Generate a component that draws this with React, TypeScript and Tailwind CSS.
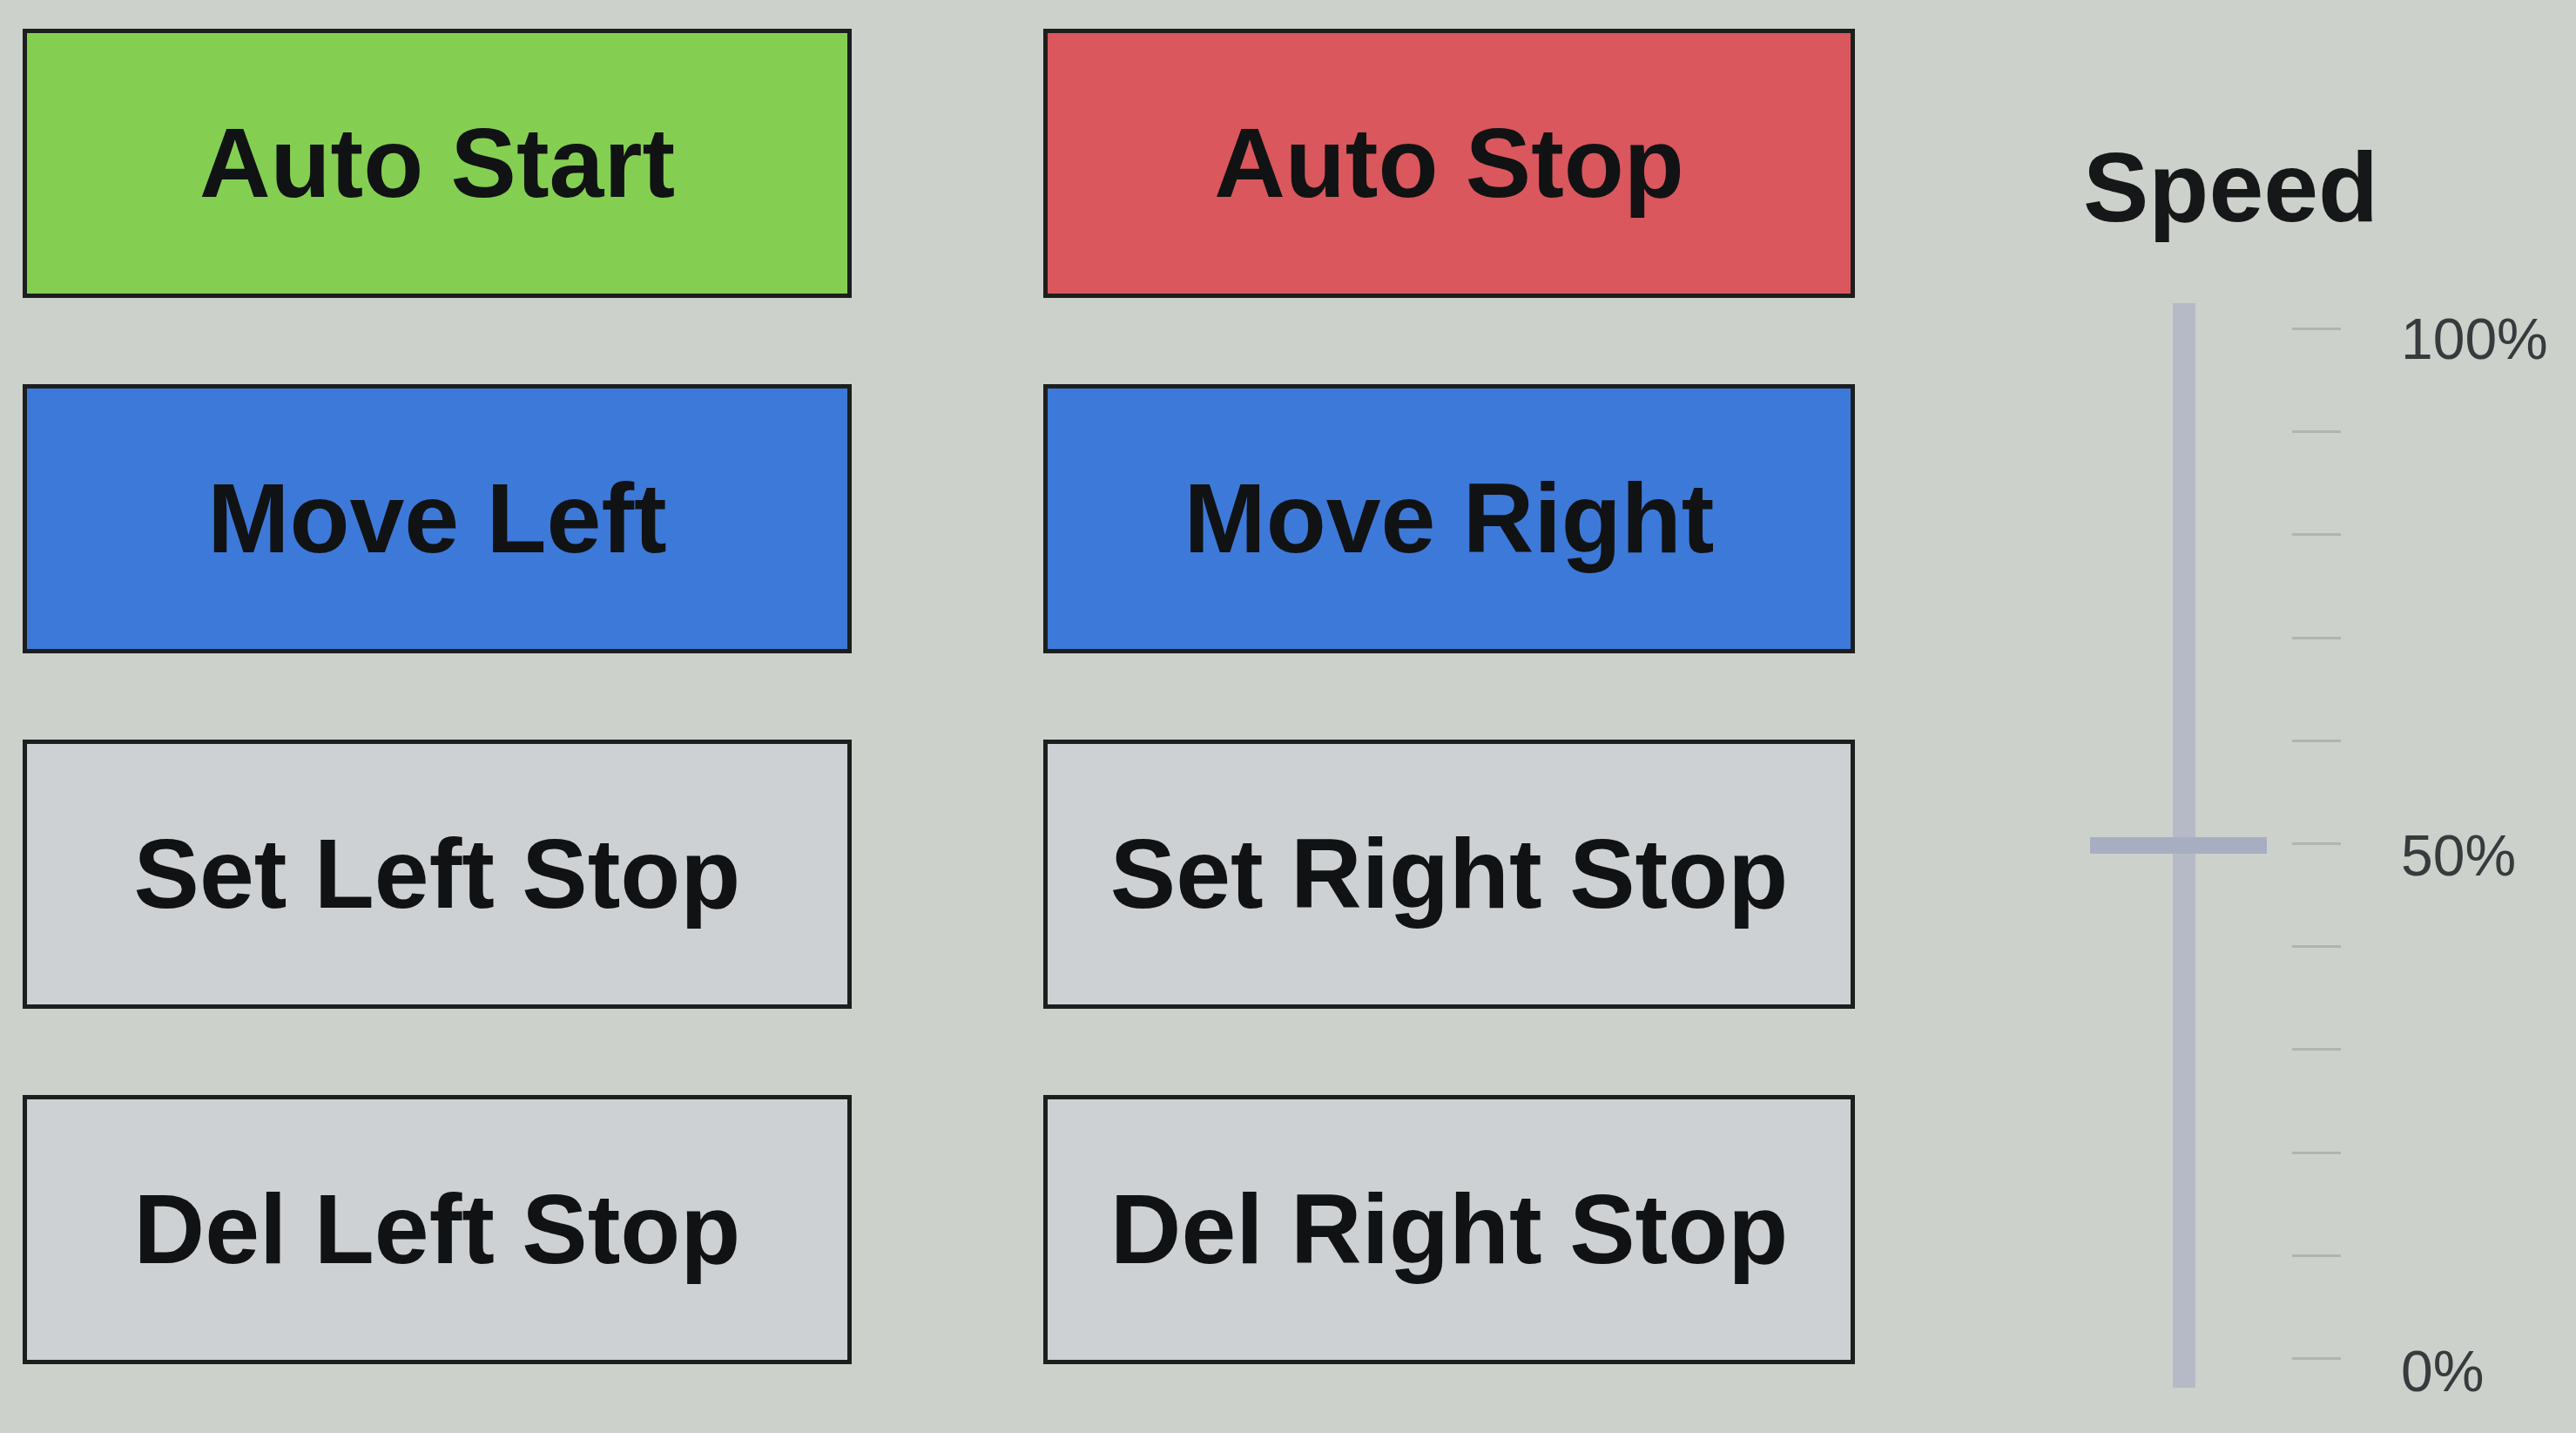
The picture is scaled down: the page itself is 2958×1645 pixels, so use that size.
import React from 'react';

type Btn = { label: string; tone: 'green' | 'red' | 'blue' | 'gray' };

const buttons: Btn[] = [
    { label: 'Auto Start', tone: 'green' },
    { label: 'Auto Stop', tone: 'red' },
    { label: 'Move Left', tone: 'blue' },
    { label: 'Move Right', tone: 'blue' },
    { label: 'Set Left Stop', tone: 'gray' },
    { label: 'Set Right Stop', tone: 'gray' },
    { label: 'Del Left Stop', tone: 'gray' },
    { label: 'Del Right Stop', tone: 'gray' },
];

const toneClass: Record<Btn['tone'], string> = {
    green: 'bg-[#84cf52]',
    red: 'bg-[#d9575d]',
    blue: 'bg-[#3d79d8]',
    gray: 'bg-[#cdd1d3]',
};

const ticks = Array.from({ length: 11 }, (_, i) => i);

const SpeedSlider: React.FC = () => {
    return (
        <div className="mt-[76px] flex h-[1245px] items-start">
            {/* track + thumb */}
            <div className="relative ml-[8px] flex h-full w-[203px] justify-center pl-[12px]">
                <div className="h-full w-[26px] bg-[#b5bac6]"></div>
                <div className="absolute inset-x-0 top-[49.2%] h-[19px] bg-[#a7aec2]"></div>
            </div>
            {/* tick marks */}
            <div className="ml-[29px] flex h-full w-[56px] flex-col justify-between pb-[32px] pt-[28px]">
                {ticks.map(t => (
                    <div key={t} className="h-[3px] w-full bg-[#b0b4b2]"></div>
                ))}
            </div>
            {/* labels */}
            <div className="ml-[69px] flex h-[1259px] flex-col justify-between pt-[8px] text-[66px] leading-none text-[#383b3e]">
                <span>100%</span>
                <span>50%</span>
                <span>0%</span>
            </div>
        </div>
    );
};

export default function App() {
    return (
        <div
            className="flex h-[1645px] w-[2958px] overflow-hidden bg-[#cdd1cb]"
            style={{ fontFamily: '"Liberation Sans", Arial, sans-serif' }}
        >
            <div className="grid grid-cols-[952px_932px] grid-rows-[309px_309px_309px_309px] gap-x-[220px] gap-y-[99px] pl-[26px] pt-[33px]">
                {buttons.map(b => (
                    <button
                        key={b.label}
                        className={`flex items-center justify-center border-[5px] border-[#1c1f1e] ${toneClass[b.tone]} text-[113px] font-bold leading-none text-[#111213]`}
                    >
                        {b.label}
                    </button>
                ))}
            </div>

            <div className="ml-[262px] flex flex-col pt-[159px]">
                <div className="text-[113px] font-bold leading-none text-[#161718]">Speed</div>
                <SpeedSlider />
            </div>
        </div>
    );
}
